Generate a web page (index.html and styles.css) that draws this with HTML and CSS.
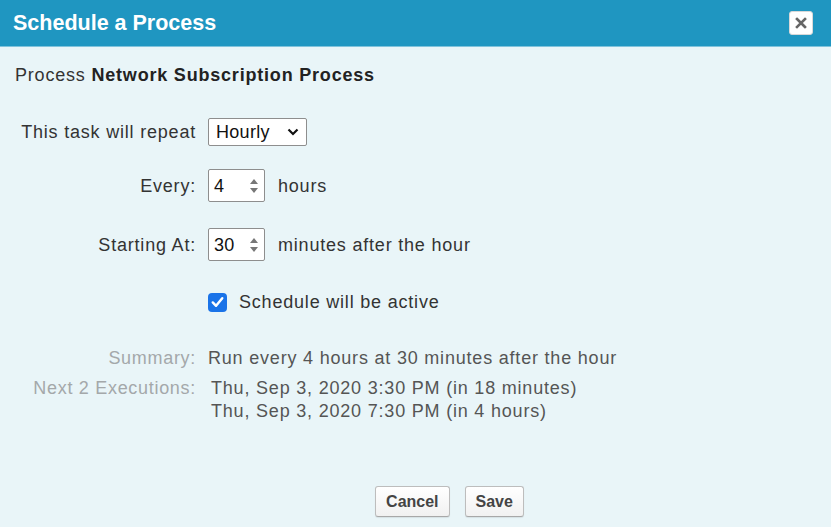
FILE: index.html
```html
<!DOCTYPE html>
<html>
<head>
<meta charset="utf-8">
<link rel="stylesheet" href="styles.css">
</head>
<body>
<div class="dialog">
  <div class="header">
    <h1 class="title">Schedule a Process</h1>
    <button class="close" aria-label="Close">
      <svg width="12" height="12" viewBox="0 0 12 12"><path d="M2 2 L10 10 M10 2 L2 10" stroke="#666" stroke-width="2.6" stroke-linecap="square"/></svg>
    </button>
  </div>
  <div class="body">
    <p class="process">Process <b>Network Subscription Process</b></p>
    <div class="form">
      <div class="row row-repeat">
        <span class="label">This task will repeat</span>
        <div class="field">
          <div class="select"><span>Hourly</span>
            <svg width="12" height="8" viewBox="0 0 12 8"><path d="M1.5 1.5 L6 6 L10.5 1.5" fill="none" stroke="#111" stroke-width="2.2"/></svg>
          </div>
        </div>
      </div>
      <div class="row row-every">
        <span class="label">Every:</span>
        <div class="field">
          <div class="spin"><span class="val">4</span>
            <svg class="arrows" width="10" height="18" viewBox="0 0 10 18"><path d="M1 7 L5 2 L9 7 Z M1 11 L5 16 L9 11 Z" fill="#777"/></svg>
          </div>
          <span class="unit">hours</span>
        </div>
      </div>
      <div class="row row-start">
        <span class="label">Starting At:</span>
        <div class="field">
          <div class="spin"><span class="val">30</span>
            <svg class="arrows" width="10" height="18" viewBox="0 0 10 18"><path d="M1 7 L5 2 L9 7 Z M1 11 L5 16 L9 11 Z" fill="#777"/></svg>
          </div>
          <span class="unit">minutes after the hour</span>
        </div>
      </div>
      <div class="row row-check">
        <span class="label"></span>
        <div class="field">
          <span class="checkbox"><svg width="20" height="20" viewBox="0 0 20 20"><path d="M5 10.5 L8.5 14 L15 6" fill="none" stroke="#fff" stroke-width="2.6" stroke-linecap="round" stroke-linejoin="round"/></svg></span>
          <span class="unit">Schedule will be active</span>
        </div>
      </div>
      <div class="row row-summary">
        <span class="label muted">Summary:</span>
        <div class="field text">Run every 4 hours at 30 minutes after the hour</div>
      </div>
      <div class="row row-next">
        <span class="label muted">Next 2 Executions:</span>
        <div class="field text exec">
          <div>Thu, Sep 3, 2020 3:30 PM (in 18 minutes)</div>
          <div>Thu, Sep 3, 2020 7:30 PM (in 4 hours)</div>
        </div>
      </div>
    </div>
    <div class="buttons">
      <button class="btn">Cancel</button>
      <button class="btn">Save</button>
    </div>
  </div>
</div>
</body>
</html>
```

FILE: styles.css
```css
html, body {
  margin: 0;
  padding: 0;
  background: #e9f5f8;
}
body {
  font-family: "Liberation Sans", Arial, sans-serif;
  color: #222;
  width: 831px;
  height: 527px;
  overflow: hidden;
}
.dialog {
  display: flex;
  flex-direction: column;
  height: 527px;
}
.header {
  background: #1f96c1;
  height: 47px;
  display: flex;
  align-items: center;
  justify-content: space-between;
  padding: 0 18px 0 13px;
  border-bottom: 1px solid #7fc3dc;
  box-sizing: border-box;
}
.title {
  margin: 0;
  color: #fff;
  font-size: 21.5px;
  font-weight: bold;
}
.close {
  width: 24px;
  height: 24px;
  padding: 0;
  border: 1px solid #d8d8d8;
  border-radius: 3px;
  background: #fff;
  display: flex;
  align-items: center;
  justify-content: center;
}
.body {
  flex: 1;
  display: flex;
  flex-direction: column;
  padding: 0 0 0 15px;
  font-size: 18px;
  letter-spacing: 0.8px;
}
.process {
  margin: 18px 0 0;
  line-height: 20px;
  color: #333;
}
.process b { color: #222; }
.form {
  display: flex;
  flex-direction: column;
  margin-top: 33px;
}
.row {
  display: grid;
  grid-template-columns: 181px auto;
  column-gap: 12px;
  align-items: center;
}
.label {
  text-align: right;
  color: #333;
  line-height: 20px;
}
.label.muted { color: #a4a8aa; letter-spacing: 0.7px; }
.field {
  display: flex;
  align-items: center;
  gap: 13px;
  line-height: 20px;
}
.select {
  width: 99px;
  height: 28px;
  box-sizing: border-box;
  border: 1px solid #8e8e8e;
  border-radius: 2px;
  background: #fff;
  display: flex;
  align-items: center;
  justify-content: space-between;
  padding: 0 7px 0 7px;
  color: #111;
  letter-spacing: 0.3px;
}
.spin {
  width: 57px;
  height: 33px;
  box-sizing: border-box;
  border: 1px solid #8e8e8e;
  border-radius: 2px;
  background: #fff;
  display: flex;
  align-items: center;
  justify-content: space-between;
  padding: 0 5px 0 5px;
  color: #111;
  letter-spacing: 0.3px;
}
.unit { color: #333; }
.row-every { margin-top: 23px; }
.row-start { margin-top: 26px; }
.row-check { margin-top: 31px; }
.row-check .field { gap: 12px; }
.checkbox {
  width: 19px;
  height: 19px;
  border-radius: 4px;
  background: #1a73e8;
  display: flex;
  align-items: center;
  justify-content: center;
}
.row-summary { margin-top: 36px; }
.row-next { margin-top: 9px; align-items: start; }
.text { color: #555; }
.exec { display: block; padding-left: 3px; line-height: 23px; }
.row-next .label { line-height: 23px; }
.buttons {
  display: flex;
  justify-content: center;
  gap: 15px;
  margin-top: auto;
  margin-bottom: 10px;
  padding-left: 53px;
  letter-spacing: 0;
}
.btn {
  font-family: "Liberation Sans", Arial, sans-serif;
  font-weight: bold;
  font-size: 16px;
  color: #444;
  height: 31px;
  padding: 0 10px;
  background: linear-gradient(#ffffff, #f1f1f1);
  border: 1px solid #bdbdbd;
  border-bottom-color: #a8a8a8;
  border-radius: 3px;
  box-shadow: 0 1px 1px rgba(0,0,0,0.08);
}
```
